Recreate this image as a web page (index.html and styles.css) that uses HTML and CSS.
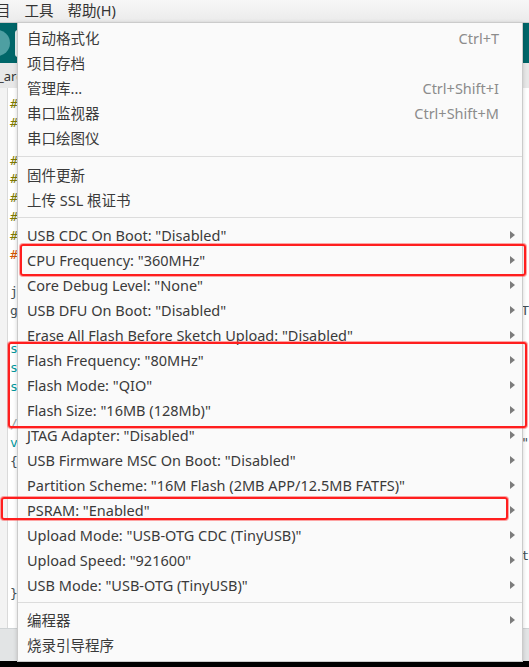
FILE: index.html
```html
<!DOCTYPE html>
<html lang="zh-CN">
<head>
<meta charset="utf-8">
<title>工具菜单</title>
<link rel="stylesheet" href="styles.css">
</head>
<body>
<div class="app">
  <div class="menubar">
    <span class="mb-item mb-first">目</span>
    <span class="mb-item">工具</span>
    <span class="mb-item">帮助(H)</span>
  </div>
  <div class="toolbar">
    <span class="tb-circle"></span>
    <span class="tb-box"></span>
  </div>
  <div class="tabs">
    <span class="tab">_ard</span>
  </div>
  <div class="editor">
    <div class="gutter"></div>
    <div class="code">
      <div class="ln"><span class="c-ol">#</span></div>
      <div class="ln"><span class="c-ol">#</span></div>
      <div class="ln"></div>
      <div class="ln"><span class="c-ol">#</span></div>
      <div class="ln"><span class="c-ol">#</span></div>
      <div class="ln"><span class="c-ol">#</span></div>
      <div class="ln"><span class="c-ol">#</span></div>
      <div class="ln"><span class="c-ol">#</span></div>
      <div class="ln"><span class="c-or">#</span></div>
      <div class="ln"></div>
      <div class="ln"><span class="c-dk">j</span></div>
      <div class="ln"><span class="c-dk">g</span><span class="c-dk">T</span></div>
      <div class="ln"></div>
      <div class="ln"><span class="c-tl">s</span></div>
      <div class="ln"><span class="c-tl">s</span></div>
      <div class="ln"><span class="c-tl">s</span></div>
      <div class="ln"></div>
      <div class="ln"><span class="c-gr">/</span></div>
      <div class="ln"><span class="c-tl">v</span><span class="c-dk">"</span></div>
      <div class="ln"><span class="c-dk">{</span></div>
      <div class="ln"></div>
      <div class="ln"></div>
      <div class="ln"></div>
      <div class="ln"></div>
      <div class="ln"><span></span><span class="c-dk">t</span></div>
      <div class="ln"></div>
      <div class="ln"><span class="c-dk">}</span></div>
    </div>
  </div>
  <div class="status"></div>
</div>

<div class="menu">
  <div class="row"><span class="lbl">自动格式化</span><span class="key">Ctrl+T</span><span class="sub"></span></div>
  <div class="row"><span class="lbl">项目存档</span><span class="sub"></span></div>
  <div class="row"><span class="lbl">管理库...</span><span class="key">Ctrl+Shift+I</span><span class="sub"></span></div>
  <div class="row"><span class="lbl">串口监视器</span><span class="key">Ctrl+Shift+M</span><span class="sub"></span></div>
  <div class="row"><span class="lbl">串口绘图仪</span><span class="sub"></span></div>
  <div class="sep sep-lg"></div>
  <div class="row"><span class="lbl">固件更新</span><span class="sub"></span></div>
  <div class="row"><span class="lbl">上传 SSL 根证书</span><span class="sub"></span></div>
  <div class="sep"></div>
  <div class="row"><span class="lbl">USB CDC On Boot: "Disabled"</span><span class="sub"><i class="arr"></i></span></div>
  <div class="row"><span class="lbl">CPU Frequency: "360MHz"</span><span class="sub"><i class="arr"></i></span></div>
  <div class="row"><span class="lbl">Core Debug Level: "None"</span><span class="sub"><i class="arr"></i></span></div>
  <div class="row"><span class="lbl">USB DFU On Boot: "Disabled"</span><span class="sub"><i class="arr"></i></span></div>
  <div class="row"><span class="lbl">Erase All Flash Before Sketch Upload: "Disabled"</span><span class="sub"><i class="arr"></i></span></div>
  <div class="row"><span class="lbl">Flash Frequency: "80MHz"</span><span class="sub"><i class="arr"></i></span></div>
  <div class="row"><span class="lbl">Flash Mode: "QIO"</span><span class="sub"><i class="arr"></i></span></div>
  <div class="row"><span class="lbl">Flash Size: "16MB (128Mb)"</span><span class="sub"><i class="arr"></i></span></div>
  <div class="row"><span class="lbl">JTAG Adapter: "Disabled"</span><span class="sub"><i class="arr"></i></span></div>
  <div class="row"><span class="lbl">USB Firmware MSC On Boot: "Disabled"</span><span class="sub"><i class="arr"></i></span></div>
  <div class="row"><span class="lbl">Partition Scheme: "16M Flash (2MB APP/12.5MB FATFS)"</span><span class="sub"><i class="arr"></i></span></div>
  <div class="row"><span class="lbl">PSRAM: "Enabled"</span><span class="sub"><i class="arr"></i></span></div>
  <div class="row"><span class="lbl">Upload Mode: "USB-OTG CDC (TinyUSB)"</span><span class="sub"><i class="arr"></i></span></div>
  <div class="row"><span class="lbl">Upload Speed: "921600"</span><span class="sub"><i class="arr"></i></span></div>
  <div class="row"><span class="lbl">USB Mode: "USB-OTG (TinyUSB)"</span><span class="sub"><i class="arr"></i></span></div>
  <div class="sep"></div>
  <div class="row"><span class="lbl">编程器</span><span class="sub"><i class="arr"></i></span></div>
  <div class="row"><span class="lbl">烧录引导程序</span><span class="sub"></span></div>
</div>

<div class="mark mark-cpu"></div>
<div class="mark mark-flash"></div>
<div class="mark mark-psram"></div>
</body>
</html>
```

FILE: styles.css
```css
* { box-sizing: border-box; }
html, body { margin: 0; padding: 0; }
body {
  width: 529px;
  height: 667px;
  overflow: hidden;
  position: relative;
  background: #000;
  font-family: "Noto Sans", "Noto Sans CJK SC", sans-serif;
  color: #3c3c3c;
}

.app {
  height: 661px;
  display: flex;
  flex-direction: column;
  background: #fff;
  overflow: hidden;
}

.menubar {
  height: 23px;
  flex: none;
  display: flex;
  align-items: center;
  gap: 14px;
  padding-left: 0;
  padding-bottom: 1px;
  background: linear-gradient(#f7f7f7, #ebebeb);
  border-bottom: 1px solid #c9c9c9;
  font-size: 14.5px;
  color: #333;
}
.mb-first { margin-left: -4px; }
.mb-item { line-height: 21px; white-space: nowrap; }

.toolbar {
  height: 40px;
  flex: none;
  background: #006669;
  display: flex;
  align-items: center;
  gap: 5px;
  padding-left: 0;
}
.tb-circle {
  width: 26px; height: 26px;
  border-radius: 50%;
  background: #4e9fa2;
  margin-left: -16px;
}
.tb-box {
  width: 8px; height: 27px;
  border-radius: 3px;
  background: #e6efef;
}

.tabs {
  height: 25px;
  flex: none;
  background: #e8e8e8;
  display: flex;
  align-items: center;
  font-size: 13px;
}
.tab { margin-left: -2px; color: #333; }

.editor {
  flex: 1;
  display: flex;
  min-height: 0;
  background: #fff;
}
.gutter {
  width: 8px;
  flex: none;
  background: #f3f3f3;
  border-right: 1px solid #dadada;
}
.code {
  flex: 1;
  padding-top: 7px;
  padding-left: 2px;
  font-family: "DejaVu Sans Mono", monospace;
  font-size: 13px;
}
.ln {
  height: 18.85px;
  line-height: 18.85px;
  display: flex;
  justify-content: space-between;
}
.c-ol { color: #7d7a00; }
.c-or { color: #d35400; }
.c-dk { color: #434f54; }
.c-tl { color: #00979c; }
.c-gr { color: #95a5a6; }

.status {
  height: 33px;
  flex: none;
  background: #e2e4e5;
  border-top: 1px solid #cfd3d5;
}

/* popup menu */
.menu {
  position: absolute;
  left: 17px;
  top: 22px;
  width: 506px;
  height: 640px;
  background: #fafafa;
  border: 1px solid #cbcbcb;
  box-shadow: 0 1px 4px rgba(0, 0, 0, 0.18);
  padding: 2px 0 4px;
  font-size: 14.5px;
  color: #3a3a3a;
}
.row {
  height: 25px;
  display: flex;
  align-items: center;
  padding-left: 9px;
  white-space: nowrap;
}
.lbl { flex: 1; }
.key { color: #8c8c8c; }
.sub {
  width: 23px;
  flex: none;
  display: flex;
  justify-content: flex-end;
  padding-right: 7px;
}
.arr {
  width: 0; height: 0;
  border-left: 5px solid #7c7c7c;
  border-top: 4px solid transparent;
  border-bottom: 4px solid transparent;
}
.sep {
  height: 1px;
  margin: 5px 0 4px;
  background: #dcdcdc;
}
.sep-lg { margin: 6px 0 5px; }

/* red annotation boxes */
.mark {
  position: absolute;
  border: 2px solid #ff1e1e;
  border-radius: 3px;
  box-shadow: 0 0 0 1px rgba(255, 60, 60, 0.45);
}
.mark-cpu { left: 20px; top: 244px; width: 506px; height: 32px; }
.mark-flash { left: 8px; top: 342px; width: 519px; height: 86px; }
.mark-psram { left: 1px; top: 497px; width: 507px; height: 23px; }
```
